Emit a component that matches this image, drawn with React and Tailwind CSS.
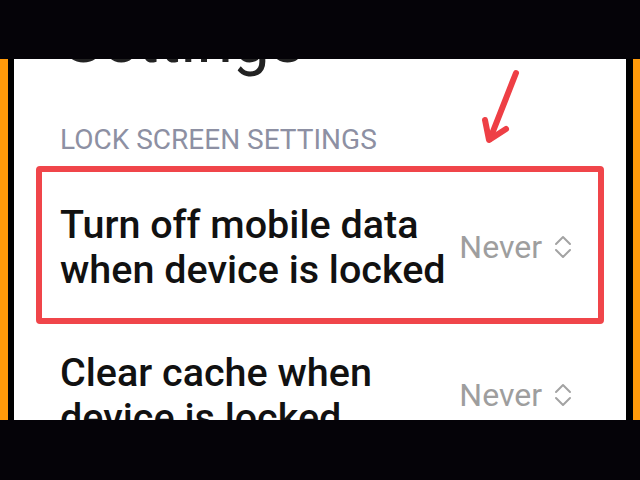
import React from "react";

const UpDown = () => (
  <svg width="18" height="24" viewBox="0 0 18 24" fill="none" stroke="#a3a3a3" strokeWidth="2" strokeLinecap="round" strokeLinejoin="round">
    <path d="M2 9 L9 2 L16 9" />
    <path d="M2 15 L9 22 L16 15" />
  </svg>
);

const Row = ({ title, boxed }) => (
  <div
    className={
      boxed
        ? "mx-[22px] flex items-center justify-between rounded-[4px] border-[6px] border-[#f0454a] pl-[18px] pr-[26px] pt-[30px] pb-[26px]"
        : "mx-[22px] mt-[26px] flex items-center justify-between border-[6px] border-transparent border-t-0 pl-[18px] pr-[26px]"
    }
  >
    <div className="text-[39.5px] leading-[45px] font-medium text-[#111111]">
      {title[0]}
      <br />
      {title[1]}
    </div>
    <div className="flex items-center gap-[12px] text-[32px] leading-none text-[#9e9e9e]">
      <span>Never</span>
      <UpDown />
    </div>
  </div>
);

export default function App() {
  return (
    <div className="flex h-[480px] w-[640px] flex-col bg-black" style={{ fontFamily: "Roboto, 'Noto Sans', sans-serif" }}>
      <div className="h-[59px] shrink-0 bg-[#050308]" />
      <div className="flex h-[361px] shrink-0">
        <div className="w-[8px] bg-[#ff9a0a]" />
        <div className="w-[6px] bg-black" />
        <div className="relative flex-1 overflow-hidden bg-white">
          <div className="ml-[49px] mt-[-52px] text-[66px] leading-none text-[#222222]">Settings</div>
          <div className="ml-[46px] mt-[53px] text-[28px] leading-[28px] text-[#8d90a3]">LOCK SCREEN SETTINGS</div>
          <div className="mt-[12px]">
            <Row boxed title={["Turn off mobile data", "when device is locked"]} />
            <Row title={["Clear cache when", "device is locked"]} />
          </div>
          <svg className="absolute left-[454px] top-[8px]" width="60" height="80" viewBox="0 0 60 80" fill="none" stroke="#ee3f45" strokeWidth="6" strokeLinecap="round" strokeLinejoin="round">
            <path d="M48 6 L22 72" />
            <path d="M17 53 L21 73 L38 62" />
          </svg>
        </div>
        <div className="w-[7px] bg-black" />
        <div className="w-[7px] bg-[#ff9a0a]" />
      </div>
      <div className="flex-1 bg-[#050308]" />
    </div>
  );
}
